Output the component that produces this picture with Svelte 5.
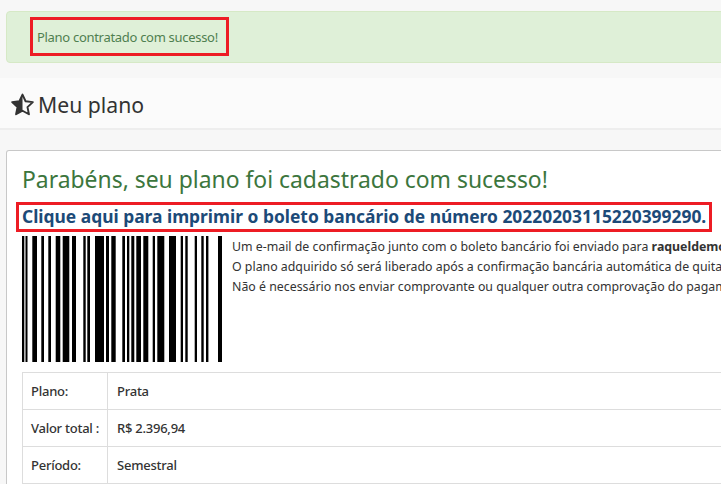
<script>
  // barcode bars as [x, width] relative to the left edge of the barcode
  const bars = [
    [0, 2.3], [3.5, 2], [10.3, 4.7], [19.3, 2.7], [26.3, 2.7], [33.7, 4.6], [40.7, 6.6], [50, 4],
    [61.3, 2.4], [65.3, 2.7], [73, 9], [84, 3], [89.3, 4.4],
    [100.3, 2.7], [105, 2.3], [109.3, 3], [114.3, 4.7], [121.3, 5], [130.7, 2.3], [135.3, 7],
    [147, 7], [158.7, 2.3], [163.3, 2.4], [172.7, 2.3], [179.3, 2.4], [184, 2.4], [196, 4]
  ];
  const plano = [
    ['Plano:', 'Prata'],
    ['Valor total :', 'R$ 2.396,94'],
    ['Período:', 'Semestral']
  ];
</script>

<div class="page">
  <div class="alert">
    <span class="mark">Plano contratado com sucesso!</span>
  </div>

  <div class="title-bar">
    <svg class="star" viewBox="0 0 24 24" width="23" height="23">
      <path d="M12 1.6l3.2 7 7.6.9-5.6 5.2 1.5 7.5L12 18.5l-6.7 3.7 1.5-7.5L1.2 9.500l7.600-.9z" fill="none" stroke="#333" stroke-width="2" stroke-linejoin="round"/>
      <path d="M12 1.600v16.900l-6.700 3.700 1.500-7.500L1.200 9.500l7.600-.9z" fill="#333"/>
    </svg>
    <h1>Meu plano</h1>
  </div>

  <div class="card">
    <h2>Parabéns, seu plano foi cadastrado com sucesso!</h2>
    <a class="boleto" href="#boleto">Clique aqui para imprimir o boleto bancário de número 20220203115220399290.</a>

    <div class="info">
      <svg class="barcode" width="200" height="126" viewBox="0 0 200 126">
        {#each bars as [x, w]}
          <rect {x} y="0" width={w} height="126" fill="#000" />
        {/each}
      </svg>
      <div class="text">
        <p>Um e-mail de confirmação junto com o boleto bancário foi enviado para <b>raqueldemo@demo.com.br</b></p>
        <p>O plano adquirido só será liberado após a confirmação bancária automática de quitação do boleto.</p>
        <p>Não é necessário nos enviar comprovante ou qualquer outra comprovação do pagamento.</p>
      </div>
    </div>

    <table>
      <tbody>
        {#each plano as [label, valor]}
          <tr>
            <th>{label}</th>
            <td>{valor}</td>
          </tr>
        {/each}
      </tbody>
    </table>
  </div>
</div>

<style>
  :global(body) {
    margin: 0;
    overflow: hidden;
    background: #f5f5f5;
  }

  .page {
    width: 721px;
    height: 484px;
    overflow: hidden;
    font-family: "Noto Sans", "Open Sans", sans-serif;
    color: #333;
    background: #f7f7f7;
    box-sizing: border-box;
    padding-top: 11px;
  }

  .alert {
    box-sizing: border-box;
    height: 52px;
    margin-left: 6px;
    margin-right: -10px;
    padding: 5px 0 0 23px;
    background: #dff0d8;
    border: 1px solid #d6e9c6;
    border-radius: 4px;
    color: #4f7f50;
    font-size: 13px;
  }

  .mark {
    display: block;
    box-sizing: border-box;
    width: 199px;
    height: 39px;
    border: 3px solid #ed1c24;
    padding: 1px 0 0 4px;
    line-height: 33px;
    letter-spacing: -0.3px;
    white-space: nowrap;
  }

  .title-bar {
    display: flex;
    align-items: center;
    gap: 4px;
    height: 52px;
    margin-top: 15px;
    padding: 3px 0 0 11px;
    background: #fbfbfb;
    border-bottom: 2px solid #eeeeee;
    box-sizing: border-box;
  }

  .star {
    flex: none;
    margin-top: -1px;
  }

  h1 {
    margin: 0;
    font-size: 21.2px;
    font-weight: 400;
  }

  .card {
    box-sizing: border-box;
    margin: 20px -20px 0 6px;
    height: 340px;
    padding: 11px 0 0 15px;
    background: #fff;
    border: 1px solid #c8c8c8;
    border-bottom: 0;
    border-radius: 3px 3px 0 0;
  }

  h2 {
    margin: 0;
    height: 40px;
    line-height: 35px;
    font-size: 22.9px;
    font-weight: 400;
    color: #3c763d;
    white-space: nowrap;
  }

  .boleto {
    display: block;
    box-sizing: border-box;
    width: 696px;
    margin-left: -6px;
    height: 30px;
    border: 3px solid #ed1c24;
    padding-left: 3px;
    line-height: 22px;
    font-size: 17.4px;
    font-weight: 700;
    color: #1c4a78;
    text-decoration: none;
    white-space: nowrap;
  }

  .info {
    display: flex;
    gap: 10px;
    margin-top: 4px;
  }

  .barcode {
    flex: none;
  }

  .text {
    font-size: 12.35px;
    white-space: nowrap;
    padding-top: 1px;
  }

  .text p {
    margin: 0;
    line-height: 20px;
  }

  table {
    width: 800px;
    margin-top: 10px;
    border-collapse: collapse;
    font-size: 13px;
    letter-spacing: -0.25px;
  }

  th, td {
    border: 1px solid #ddd;
    height: 36px;
    padding: 0 8px;
    text-align: left;
    font-weight: 500;
    white-space: nowrap;
  }

  td {
    padding-left: 9px;
  }

  th {
    width: 68px;
  }
</style>
